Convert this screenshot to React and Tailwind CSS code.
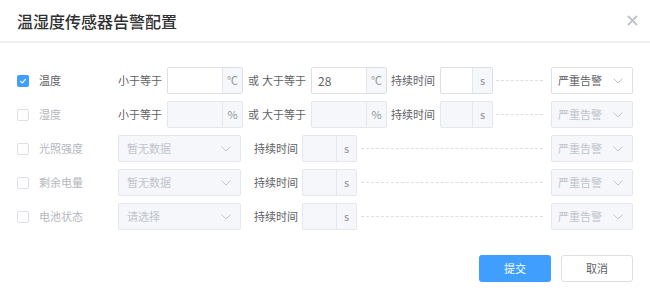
import React from "react";

const FONT = { fontFamily: '"Noto Sans CJK SC", "Noto Sans", sans-serif' };

const Check = ({ checked }) =>
    checked ? (
        <span className="flex h-[12px] w-[12px] shrink-0 items-center justify-center rounded-[2px] bg-[#409eff]">
            <svg width="8" height="8" viewBox="0 0 8 8" fill="none">
                <path d="M1.3 4.1 L3.2 5.9 L6.7 2.2" stroke="#fff" strokeWidth="1.2" />
            </svg>
        </span>
    ) : (
        <span className="h-[12px] w-[12px] shrink-0 rounded-[2px] border border-[#dcdfe6] bg-white" />
    );

const Chevron = () => (
    <svg width="10" height="6" viewBox="0 0 10 6" fill="none">
        <path d="M0.5 0.5 L5 5 L9.5 0.5" stroke="#c0c4cc" strokeWidth="1" />
    </svg>
);

// input with unit on the right
const UnitInput = ({ width, unit, value, disabled }) => (
    <div
        className={`flex h-[27px] ${width} shrink-0 overflow-hidden rounded-[2px] border ${
            disabled ? "border-[#e4e7ed] bg-[#f5f7fa]" : "border-[#dcdfe6] bg-white"
        }`}
    >
        <div className="flex-1 pl-[6px] text-[12px] leading-[25px] text-[#606266]">{value}</div>
        <div className="flex w-[20px] items-center justify-center border-l border-[#e4e7ed] bg-[#f5f7fa] text-[#909399]">
            {unit}
        </div>
    </div>
);

const Select = ({ width, text, disabled, pad }) => (
    <div
        className={`flex h-[27px] ${width} shrink-0 items-center justify-between rounded-[2px] border ${pad} pr-[9px] ${
            disabled ? "border-[#e4e7ed] bg-[#f5f7fa] text-[#c0c4cc]" : "border-[#dcdfe6] bg-white text-[#606266]"
        }`}
    >
        <span className="whitespace-nowrap">{text}</span>
        <Chevron />
    </div>
);

const Dash = ({ width }) => <div className={`${width} border-t border-dashed border-[#dcdfe6]`} />;

const rangeRows = [
    { name: "温度", checked: true, unit: "℃", high: "28" },
    { name: "湿度", checked: false, unit: "%", high: "" },
];

const selectRows = [
    { name: "光照强度", placeholder: "暂无数据" },
    { name: "剩余电量", placeholder: "暂无数据" },
    { name: "电池状态", placeholder: "请选择" },
];

const App = () => {
    return (
        <div className="h-[296px] w-[650px] overflow-hidden bg-white text-[11px] whitespace-nowrap" style={FONT}>
            {/* header */}
            <div className="flex h-[43px] items-center justify-between border-b-2 border-[#eef0f3] pl-[17px] pr-[12px]">
                <h2 className="text-[16px] font-medium text-[#303133]">温湿度传感器告警配置</h2>
                <svg width="11" height="11" viewBox="0 0 11 11" fill="none">
                    <path d="M1 1 L10 10 M10 1 L1 10" stroke="#c0c4cc" strokeWidth="1.8" />
                </svg>
            </div>

            {/* rows */}
            <div className="flex flex-col gap-[7px] pl-[17px] pt-[24px]">
                {rangeRows.map((row) => (
                    <div key={row.name} className="flex h-[27px] items-center">
                        <Check checked={row.checked} />
                        <span
                            className={`ml-[10px] w-[79px] shrink-0 ${
                                row.checked ? "text-[#606266]" : "text-[#b4b7bd]"
                            }`}
                        >
                            {row.name}
                        </span>
                        <span className="w-[49px] shrink-0 text-[#606266]">小于等于</span>
                        <UnitInput width="w-[76px]" unit={row.unit} disabled={!row.checked} />
                        <span className="flex w-[68px] shrink-0 gap-[3px] pl-[5px] text-[#606266]">
                            <span>或</span>
                            <span>大于等于</span>
                        </span>
                        <UnitInput width="w-[76px]" unit={row.unit} value={row.high} disabled={!row.checked} />
                        <span className="w-[53px] shrink-0 pl-[4px] text-[#606266]">持续时间</span>
                        <UnitInput width="w-[53px]" unit="s" disabled={!row.checked} />
                        <div className="ml-[3px]">
                            <Dash width="w-[47px]" />
                        </div>
                        <div className="ml-[8px]">
                            <Select width="w-[82px]" text="严重告警" disabled={!row.checked} pad="pl-[6px]" />
                        </div>
                    </div>
                ))}

                {selectRows.map((row) => (
                    <div key={row.name} className="flex h-[27px] items-center">
                        <Check checked={false} />
                        <span className="ml-[10px] w-[79px] shrink-0 text-[#b4b7bd]">{row.name}</span>
                        <Select width="w-[123px]" text={row.placeholder} disabled pad="pl-[8px]" />
                        <span className="w-[61px] shrink-0 pl-[13px] text-[#606266]">持续时间</span>
                        <UnitInput width="w-[55px]" unit="s" disabled />
                        <div className="ml-[4px]">
                            <Dash width="w-[182px]" />
                        </div>
                        <div className="ml-[8px]">
                            <Select width="w-[82px]" text="严重告警" disabled pad="pl-[6px]" />
                        </div>
                    </div>
                ))}
            </div>

            {/* footer */}
            <div className="mt-[25px] flex justify-end gap-[10px] pr-[17px]">
                <button className="h-[27px] w-[72px] rounded-[3px] bg-[#409eff] text-white">提交</button>
                <button className="h-[27px] w-[72px] rounded-[3px] border border-[#dcdfe6] bg-white text-[#606266]">
                    取消
                </button>
            </div>
        </div>
    );
};

export default App;
